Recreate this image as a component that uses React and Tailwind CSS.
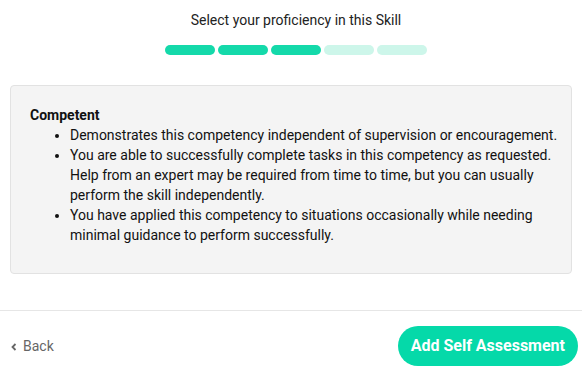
import React from "react";

const levels = [true, true, true, false, false];

const points = [
  "Demonstrates this competency independent of supervision or encouragement.",
  "You are able to successfully complete tasks in this competency as requested. Help from an expert may be required from time to time, but you can usually perform the skill independently.",
  "You have applied this competency to situations occasionally while needing minimal guidance to perform successfully.",
];

const App = () => {
  return (
    <div className="w-[582px] h-[376px] bg-white text-[#1a1a1a] font-['Roboto',sans-serif] flex flex-col">
      <div className="flex flex-col items-center pt-[10px] pl-[10px]">
        <h2 className="text-[14px] leading-[20px] text-[#222]">Select your proficiency in this Skill</h2>
        <div className="flex gap-[3px] mt-[15px]">
          {levels.map((on, i) => (
            <div
              key={i}
              className={on ? "w-[50px] h-[10px] rounded-full bg-[#14d9aa]" : "w-[50px] h-[10px] rounded-full bg-[#cdf6ea]"}
            />
          ))}
        </div>
      </div>

      <div className="mx-[10px] mt-[30px] h-[189px] bg-[#f4f4f4] border border-[#e2e2e2] rounded-[4px] pl-[19px] pr-[2px] pt-[19px] text-[14px] leading-[20px] text-[#111]">
        <div className="font-bold">Competent</div>
        <ul className="list-disc pl-[40px]">
          {points.map((p, i) => (
            <li key={i}>{p}</li>
          ))}
        </ul>
      </div>

      <div className="mt-[36px] border-t border-[#e6e6e6] flex items-center justify-between pl-[10px] pr-[4px] pt-[15px]">
        <button className="flex items-center gap-[5px] text-[14px] text-[#666]">
          <svg width="8" height="8" viewBox="0 0 8 8" className="mt-[1px]">
            <path d="M5.5 1 L2.5 4 L5.5 7" fill="none" stroke="#666" strokeWidth="1.8" />
          </svg>
          Back
        </button>
        <button className="h-[40px] px-[13px] rounded-full bg-[#05d9a9] text-white font-bold text-[16px]">
          Add Self Assessment
        </button>
      </div>
    </div>
  );
};

export default App;
